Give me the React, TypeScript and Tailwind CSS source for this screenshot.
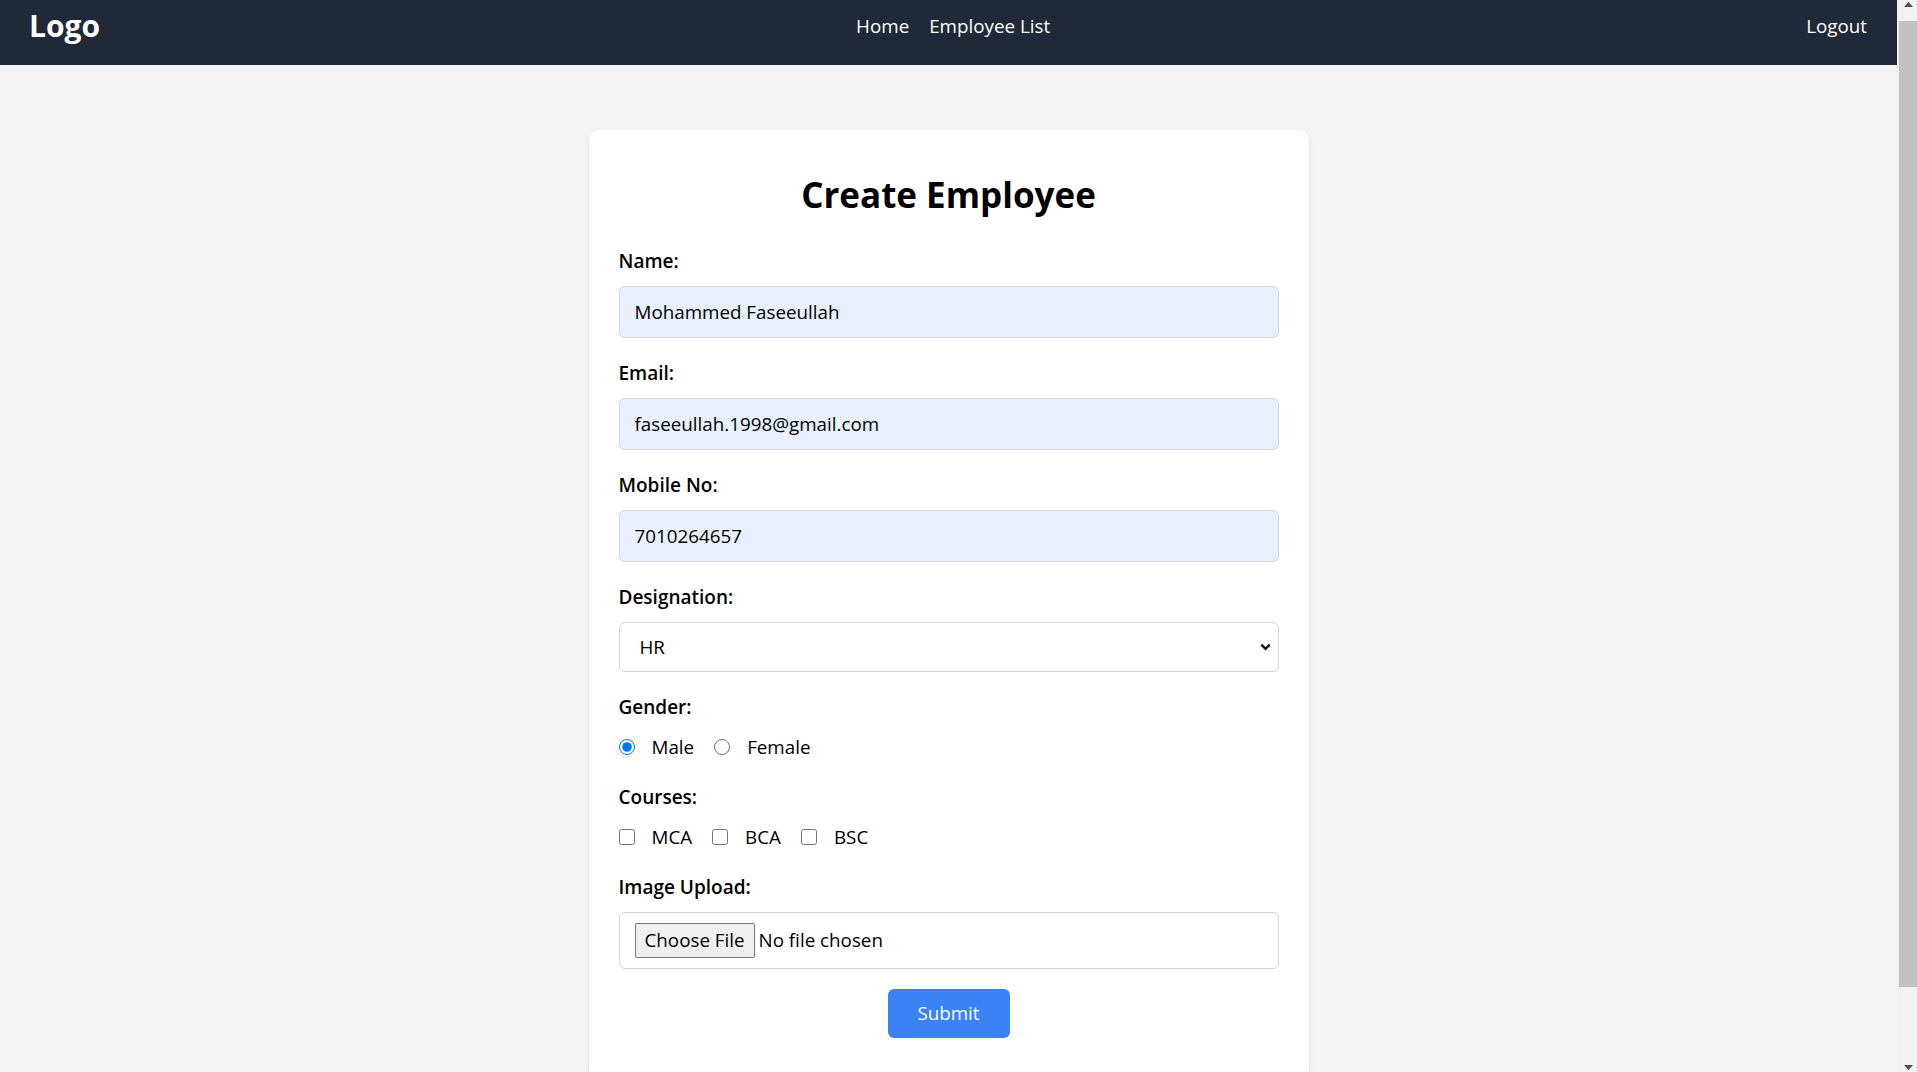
import React, { useState } from "react";

// Segoe UI is not installed; Open Sans at ~0.94 of the size matches its widths.
const FONT = "font-['Segoe_UI','Open_Sans','Noto_Sans',sans-serif]";

const COURSES = ["MCA", "BCA", "BSC"];

function Navbar() {
  return (
    <nav className="flex h-[65px] shrink-0 items-start justify-between bg-[#1f2937] pl-[29px] pr-[30px] text-white">
      <a href="#" className="mt-[6px] block text-[30px] font-bold leading-[40px]">
        Logo
      </a>
      <div className="mt-[11px] flex gap-[20px] text-[18.8px] leading-[30px]">
        <a href="#">Home</a>
        <a href="#">Employee List</a>
      </div>
      <a href="#" className="mt-[11px] block text-[18.8px] leading-[30px]">
        Logout
      </a>
    </nav>
  );
}

function Field({ label, children }: { label: string; children: React.ReactNode }) {
  return (
    <div className="mb-[20px]">
      <label className="mb-[10px] block text-[19px] font-semibold leading-[30px] text-black">
        {label}
      </label>
      {children}
    </div>
  );
}

function TextInput({ value, type = "text" }: { value: string; type?: string }) {
  return (
    <input
      type={type}
      defaultValue={value}
      className="block h-[52px] w-full rounded-[6px] border border-[#d1d5db] bg-[#e8f0fe] px-[15px] text-[18.8px] text-black outline-none"
    />
  );
}

function CreateEmployeeForm() {
  const [gender, setGender] = useState("male");
  const [courses, setCourses] = useState<string[]>([]);

  const toggleCourse = (c: string) =>
    setCourses((prev) => (prev.includes(c) ? prev.filter((x) => x !== c) : [...prev, c]));

  return (
    <div className="w-[720px] rounded-[10px] bg-white px-[30px] pb-[41px] pt-[42px] shadow-md">
      <h1 className="mb-[29px] text-center text-[35px] font-bold leading-[45px] text-black">
        Create Employee
      </h1>

      <form onSubmit={(e) => e.preventDefault()}>
        <Field label="Name:">
          <TextInput value="Mohammed Faseeullah" />
        </Field>
        <Field label="Email:">
          <TextInput type="email" value="faseeullah.1998@gmail.com" />
        </Field>
        <Field label="Mobile No:">
          <TextInput value="7010264657" />
        </Field>

        <Field label="Designation:">
          <div className="relative">
            <select
              defaultValue="HR"
              className="block h-[50px] w-full appearance-none rounded-[6px] border border-[#d1d5db] bg-white pl-[20px] pr-[40px] text-[18.8px] text-black outline-none"
            >
              <option>HR</option>
              <option>Manager</option>
              <option>Sales</option>
            </select>
            {/* native-looking chevron */}
            <svg
              className="pointer-events-none absolute right-[8px] top-1/2 -translate-y-1/2"
              width="11"
              height="8"
              viewBox="0 0 11 8"
              fill="none"
            >
              <path d="M1.3 1.6 5.5 5.8 9.7 1.6" stroke="#111" strokeWidth="2.4" />
            </svg>
          </div>
        </Field>

        <Field label="Gender:">
          <div className="flex h-[30px] items-center text-[18.8px] text-black">
            {[
              ["male", "Male"],
              ["female", "Female"],
            ].map(([val, text]) => (
              <label key={val} className="mr-[20px] flex items-center">
                <input
                  type="radio"
                  name="gender"
                  checked={gender === val}
                  onChange={() => setGender(val)}
                  className="h-4 w-4"
                />
                <span className="ml-[17px]">{text}</span>
              </label>
            ))}
          </div>
        </Field>

        <Field label="Courses:">
          <div className="flex h-[30px] items-center text-[18.8px] text-black">
            {COURSES.map((c) => (
              <label key={c} className="mr-[20px] flex items-center">
                <input
                  type="checkbox"
                  checked={courses.includes(c)}
                  onChange={() => toggleCourse(c)}
                  className="h-4 w-4"
                />
                <span className="ml-[17px]">{c}</span>
              </label>
            ))}
          </div>
        </Field>

        <Field label="Image Upload:">
          <label className="flex h-[57px] w-full cursor-pointer items-center rounded-[6px] border border-[#d1d5db] bg-white px-[15px] text-[18.8px] text-black">
            <input type="file" accept="image/*" className="sr-only" />
            <span className="flex h-[35px] items-center rounded-[2px] border border-[#767676] bg-[#efefef] px-[9px]">
              Choose File
            </span>
            <span className="ml-[4px]">No file chosen</span>
          </label>
        </Field>

        <button
          type="submit"
          className="mx-auto block h-[49px] w-[122px] rounded-[6px] bg-[#3b82f6] text-[18.8px] text-white"
        >
          Submit
        </button>
      </form>
    </div>
  );
}

// Windows-style scrollbar as seen in the screenshot (headless shots hide the real one).
function FakeScrollbar() {
  return (
    <div aria-hidden className="flex w-[20px] shrink-0 flex-col bg-[#f1f1f1]">
      <div className="flex h-[21px] justify-center pl-[2px] pt-[2px]">
        <svg width="9" height="5" viewBox="0 0 9 5">
          <path d="M4.5 0 9 5H0z" fill="#505050" />
        </svg>
      </div>
      <div className="ml-[2px] h-[966px] bg-[#c1c1c1]" />
      <div className="flex-1" />
      <div className="flex h-[7px] justify-center pb-[1px] pl-[2px]">
        <svg width="9" height="5" viewBox="0 0 9 5">
          <path d="M0 0h9L4.5 5z" fill="#505050" />
        </svg>
      </div>
    </div>
  );
}

export default function App() {
  return (
    <div className={`${FONT} flex h-screen bg-[#f3f4f6]`}>
      <div className="flex min-w-0 flex-1 flex-col overflow-y-auto [scrollbar-width:none]">
        <Navbar />
        <main className="flex shrink-0 justify-center py-[65px]">
          <CreateEmployeeForm />
        </main>
      </div>
      <FakeScrollbar />
    </div>
  );
}
